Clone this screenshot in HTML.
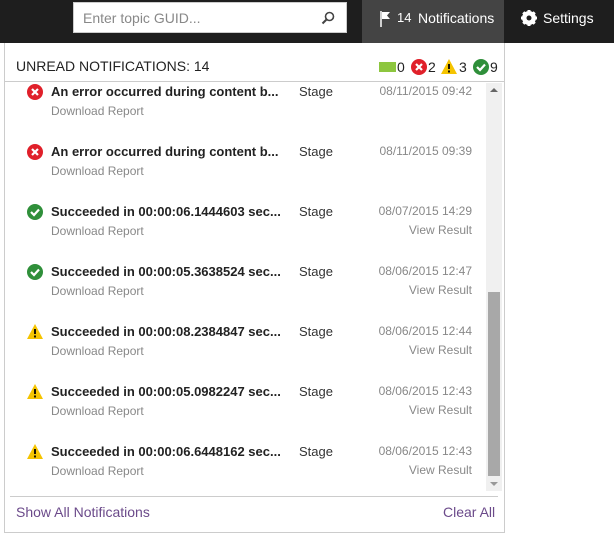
<!DOCTYPE html><html><head><style>
*{margin:0;padding:0;box-sizing:border-box}
body{width:614px;height:530px;background:#fff;font-family:"Liberation Sans",sans-serif;position:relative;overflow:hidden}
.bar{position:absolute;left:0;top:0;width:614px;height:43px;background:#1e1e1e}
.search{position:absolute;left:73px;top:2px;width:274px;height:31px;background:#fff;border:1px solid #ccc}
.search span{position:absolute;left:9px;top:7px;font-size:14px;color:#888}
.notif{position:absolute;left:362px;top:0;width:142px;height:43px;background:#444;color:#fff;font-size:14px}
.set{position:absolute;left:520px;top:10px;color:#fff;font-size:14px}
.panel{position:absolute;left:4px;top:43px;width:501px;height:490px;border:1px solid #ccc;border-top:none;background:#fff}
.hdr{position:absolute;left:16px;top:58px;font-size:14px;color:#222}
.hline{position:absolute;left:5px;top:81px;width:499px;height:1px;background:#ccc}
.row{position:absolute;left:0;width:480px;height:60px}
.ic{position:absolute;left:27px;top:0}
.t{position:absolute;left:51px;top:0;font-size:13px;font-weight:bold;color:#222}
.st{position:absolute;left:299px;top:0;font-size:13px;color:#333}
.dt{position:absolute;right:8px;top:0;font-size:12px;color:#888}
.dl{position:absolute;left:51px;top:20px;font-size:12px;color:#888}
.vr{position:absolute;right:8px;top:19px;font-size:12px;color:#888}
.sb{position:absolute;left:486px;top:83px;width:16px;height:408px;background:#f0f0f0}
.th{position:absolute;left:488px;top:292px;width:12px;height:184px;background:#a8a8a8}
.fline{position:absolute;left:10px;top:496px;width:488px;height:1px;background:#ccc}
.f{position:absolute;top:504px;font-size:14px;color:#6b4a8a}
.bd{position:absolute;top:59px;font-size:14px;color:#222}
</style></head><body>
<div class="bar"></div>
<div class="search"><span>Enter topic GUID...</span>
<svg style="position:absolute;left:247px;top:8px" width="14" height="14" viewBox="0 0 14 14"><circle cx="8.5" cy="5.5" r="4" fill="none" stroke="#444" stroke-width="1.6"/><path d="M5.5 8.5L1.5 12.5" stroke="#444" stroke-width="2"/></svg></div>
<div class="notif">
<svg style="position:absolute;left:18px;top:11px" width="12" height="16" viewBox="0 0 12 16"><path d="M1 0V16" stroke="#fff" stroke-width="1.5"/><path d="M2 1H10L7 4.5L10 8H2Z" fill="#fff"/></svg>
<span style="position:absolute;left:35px;top:10px;font-size:13px">14</span>
<span style="position:absolute;left:56px;top:10px">Notifications</span></div>
<svg style="position:absolute;left:520px;top:9px" width="18" height="18" viewBox="0 0 18 18"><circle cx="9" cy="9" r="5.5" fill="none" stroke="#fff" stroke-width="3"/><g stroke="#fff" stroke-width="3"><path d="M9 1V17M1 9H17M3.3 3.3L14.7 14.7M14.7 3.3L3.3 14.7"/></g><circle cx="9" cy="9" r="2.5" fill="#1e1e1e"/></svg>
<div class="set" style="left:543px">Settings</div>
<div class="panel"></div>
<div class="hdr">UNREAD NOTIFICATIONS: 14</div>
<div style="position:absolute;left:379px;top:62px;width:17px;height:10px;background:#8dc63f"></div>
<div class="bd" style="left:397px">0</div>
<svg style="position:absolute;left:411px;top:59px" width="16" height="16" viewBox="0 0 16 16"><circle cx="8" cy="8" r="8" fill="#e0202a"/><path d="M5 5L11 11M11 5L5 11" stroke="#fff" stroke-width="2.2"/></svg>
<div class="bd" style="left:428px">2</div>
<svg style="position:absolute;left:441px;top:59px" width="16" height="15" viewBox="0 0 16 15"><path d="M8 0L16 15H0Z" fill="#f5c400"/><path d="M8 5V10M8 11.5V13.5" stroke="#000" stroke-width="1.8"/></svg>
<div class="bd" style="left:459px">3</div>
<svg style="position:absolute;left:473px;top:59px" width="16" height="16" viewBox="0 0 16 16"><circle cx="8" cy="8" r="8" fill="#2f8f3a"/><path d="M4 8L7 11L12 5.5" stroke="#fff" stroke-width="2.2" fill="none"/></svg>
<div class="bd" style="left:490px">9</div>
<div class="hline"></div>
<div id="rows"></div>
<div class="sb"></div><div class="th"></div>
<div style="position:absolute;left:490px;top:88px;border:4px solid transparent;border-bottom:4px solid #666;border-top:none;width:0"></div>
<div style="position:absolute;left:490px;top:482px;border:4px solid transparent;border-top:4px solid #999;border-bottom:none;width:0"></div>
<div class="fline"></div>
<div class="f" style="left:16px">Show All Notifications</div>
<div class="f" style="left:443px">Clear All</div>
<script>
var err='<svg width="16" height="16" viewBox="0 0 16 16"><circle cx="8" cy="8" r="8" fill="#e0202a"/><path d="M5 5L11 11M11 5L5 11" stroke="#fff" stroke-width="2.2"/></svg>';
var ok='<svg width="16" height="16" viewBox="0 0 16 16"><circle cx="8" cy="8" r="8" fill="#2f8f3a"/><path d="M4 8L7 11L12 5.5" stroke="#fff" stroke-width="2.2" fill="none"/></svg>';
var w='<svg width="16" height="15" viewBox="0 0 16 15"><path d="M8 0L16 15H0Z" fill="#f5c400"/><path d="M8 5V10M8 11.5V13.5" stroke="#000" stroke-width="1.8"/></svg>';
var d=[[err,'An error occurred during content b...','08/11/2015 09:42',0],[err,'An error occurred during content b...','08/11/2015 09:39',0],[ok,'Succeeded in 00:00:06.1444603 sec...','08/07/2015 14:29',1],[ok,'Succeeded in 00:00:05.3638524 sec...','08/06/2015 12:47',1],[w,'Succeeded in 00:00:08.2384847 sec...','08/06/2015 12:44',1],[w,'Succeeded in 00:00:05.0982247 sec...','08/06/2015 12:43',1],[w,'Succeeded in 00:00:06.6448162 sec...','08/06/2015 12:43',1]];
var h='';d.forEach(function(r,i){var y=84+i*60;h+='<div class="row" style="top:'+y+'px"><div class="ic">'+r[0]+'</div><div class="t">'+r[1]+'</div><div class="st">Stage</div><div class="dt">'+r[2]+'</div><div class="dl">Download Report</div>'+(r[3]?'<div class="vr">View Result</div>':'')+'</div>';});
document.getElementById('rows').innerHTML=h;
</script>
</body></html>
